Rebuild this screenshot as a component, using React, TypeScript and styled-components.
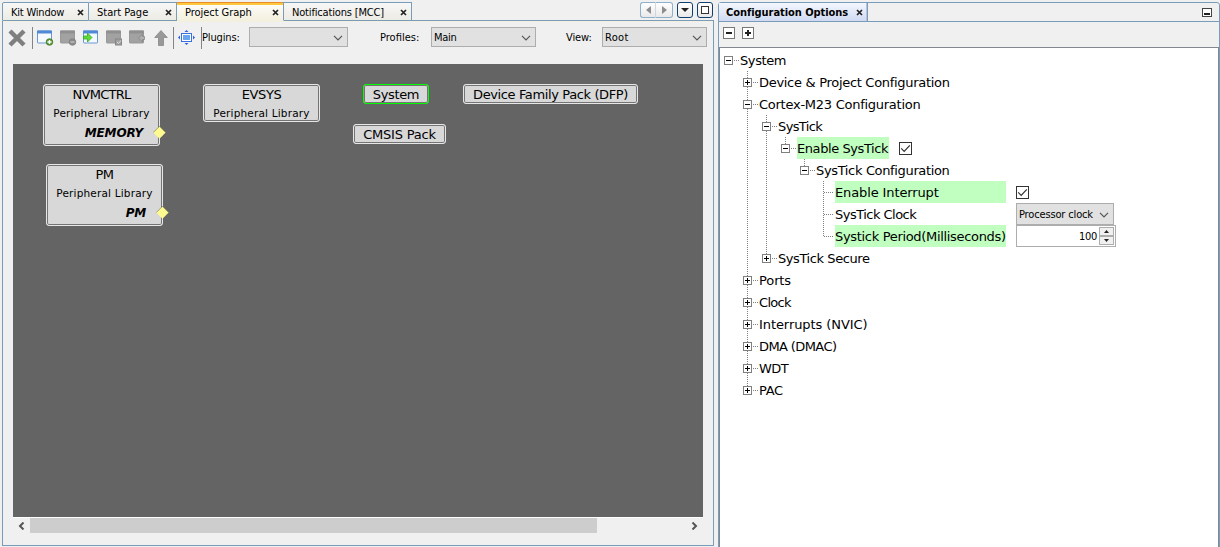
import React from 'react';
import styled, { createGlobalStyle, css } from 'styled-components';

const UI = `"DejaVu Sans Condensed", "DejaVu Sans", sans-serif`;
const WIDE = `"DejaVu Sans", sans-serif`;

const GlobalStyle = createGlobalStyle`
  * { box-sizing: border-box; }
  body { margin: 0; background: #f0f0f0; overflow: hidden; color: #000; font: 11px/14px ${UI}; }
`;

const Window = styled.div`
  display: flex;
  width: 1220px;
  height: 547px;
  padding: 2px 0 0 2px;
  overflow: hidden;
`;

const Text = styled.span<{ $ls?: number }>`
  white-space: pre;
  letter-spacing: ${(p) => p.$ls ?? 0}px;
`;

/* ---------- left window ---------- */
const GraphWindow = styled.section`
  width: 712px;
  height: 544px;
  display: flex;
  flex-direction: column;
`;

const TabStrip = styled.header`
  display: flex;
  height: 19px;
  flex: none;
`;

const Tab = styled.div<{ $w: number; $active?: boolean }>`
  width: ${(p) => p.$w}px;
  display: flex;
  align-items: center;
  justify-content: space-between;
  padding: 2px 4px 0 8px;
  border: 1px solid #7a9cbb;
  border-left-width: 0;
  background: linear-gradient(#f7f7f7, #ecebe4);
  &:first-child { border-left-width: 1px; border-top-left-radius: 2px; }
  ${(p) =>
    p.$active &&
    css`
      border-top: 0;
      padding-top: 3px;
      border-bottom-color: #f2efdf;
      background: linear-gradient(#e98b2c 0 1px, #ffc73c 1px 3px, #fdfcf7 3px, #f3f0df);
    `}
`;

const StripFill = styled.div`
  flex: 1;
  display: flex;
  justify-content: flex-end;
  padding-right: 1px;
  border-bottom: 1px solid #7a9cbb;
`;

const NavButton = styled.div<{ $soft?: boolean; $side?: 'l' | 'r' }>`
  width: ${(p) => (p.$side === 'r' ? 17 : 16)}px;
  height: 16px;
  display: flex;
  align-items: center;
  justify-content: center;
  border: 1px solid ${(p) => (p.$soft ? '#8fb0cb' : '#123f70')};
  border-radius: ${(p) => (p.$side === 'l' ? '3px 0 0 3px' : p.$side === 'r' ? '0 3px 3px 0' : '3px')};
  ${(p) => p.$side === 'r' && 'border-left: 0;'}
  ${(p) => p.$side === 'l' && 'border-right-color: #d0d8de;'}
  background: linear-gradient(#fff, #e9e9e9);
  margin-right: ${(p) => (p.$side === 'l' ? 0 : 4)}px;
  &:last-child { margin-right: 0; }
`;

const GraphBody = styled.div`
  flex: 1;
  border: 1px solid #7a9cbb;
  border-top: 0;
  display: flex;
  flex-direction: column;
  padding: 0 10px;
`;

const Toolbar = styled.div`
  height: 43px;
  margin: 0 -10px;
  padding: 6px 0 0 5px;
  display: flex;
  align-items: flex-start;
  flex: none;
  background: linear-gradient(#f3f0df 0 1px, #f0f0f0 1px);
`;

const Slot = styled.div<{ $w: number; $indent?: number }>`
  width: ${(p) => p.$w}px;
  padding-left: ${(p) => p.$indent ?? 0}px;
  height: 21px;
  display: flex;
  align-items: center;
  flex: none;
  svg { display: block; overflow: visible; }
`;

const Divider = styled.div`
  width: 1px;
  height: 22px;
  background: #848484;
  flex: none;
`;

const Select = styled.div<{ $w: number; $h?: number }>`
  width: ${(p) => p.$w}px;
  height: ${(p) => p.$h ?? 20}px;
  flex: none;
  display: flex;
  align-items: center;
  justify-content: space-between;
  padding: 2px 4px 0 2px;
  font: 11px/16px ${UI};
  background: #e1e1e1;
  border: 1px solid #adadad;
`;

const Canvas = styled.div`
  position: relative;
  height: 453px;
  flex: none;
  background: #646464;
`;

const Node = styled.div<{ $x: number; $y: number; $w: number; $h: number; $on?: boolean }>`
  position: absolute;
  left: ${(p) => p.$x}px;
  top: ${(p) => p.$y}px;
  width: ${(p) => p.$w}px;
  height: ${(p) => p.$h}px;
  border: 1px solid ${(p) => (p.$on ? '#00ff00' : '#e6e6e6')};
  border-radius: 3px;
  box-shadow: inset 0 0 0 1px #747474;
  background: #d8d8d8;
  display: flex;
  flex-direction: column;
  align-items: center;
  font-family: ${WIDE};
`;

const Title = styled.div`
  font-size: 13px;
  line-height: 20px;
  height: 19px;
`;

const Subtitle = styled.div`
  font-size: 10.5px;
  line-height: 19px;
  height: 19px;
  letter-spacing: 0.18px;
`;

const Port = styled.div`
  align-self: flex-end;
  padding-right: 16px;
  font: italic bold 12px/20px ${WIDE};
`;

const Pin = styled.svg`
  position: absolute;
  right: -7px;
  bottom: 6px;
`;

const ScrollBar = styled.div`
  display: flex;
  align-items: flex-start;
  height: 17px;
  border-top: 1px solid #fff;
`;

const ScrollArrow = styled.div`
  width: 17px;
  height: 15px;
  display: flex;
  align-items: center;
  justify-content: center;
`;

const ScrollTrack = styled.div`
  flex: 1;
  height: 15px;
`;

const ScrollThumb = styled.div`
  width: 567px;
  height: 15px;
  background: #cdcdcd;
`;

/* ---------- right window ---------- */
const OptionsWindow = styled.section`
  margin-left: 4px;
  width: 502px;
  height: 550px;
  border: 1px solid #7a9cbb;
  border-radius: 3px 3px 0 0;
  display: flex;
  flex-direction: column;
`;

const OptionsHeader = styled.header`
  height: 19px;
  flex: none;
  display: flex;
  justify-content: space-between;
  border-bottom: 1px solid #7a9cbb;
  padding-right: 7px;
  align-items: center;
`;

const OptionsTab = styled.div`
  width: 149px;
  height: 18px;
  display: flex;
  align-items: center;
  justify-content: space-between;
  padding: 1px 4px 0 7px;
  font-weight: bold;
  border-right: 1px solid #7a9cbb;
  box-shadow: inset -1px 0 #b4c3e0;
  background: linear-gradient(#f4f7fd, #cfdaf2);
`;

const OptionsTools = styled.div`
  height: 25px;
  flex: none;
  display: flex;
  gap: 7px;
  padding: 5px 0 0 4px;
`;

const TreePane = styled.div`
  flex: 1;
  background: #fff;
  border: 1px solid #828790;
  padding: 1px 0 0 4px;
  font: 13px/22px ${WIDE};
`;

const Row = styled.div`
  display: flex;
  height: 22px;
  align-items: center;
`;

const vdots = 'repeating-linear-gradient(#808080 0 1px, transparent 1px 2px)';
const hdots = 'repeating-linear-gradient(90deg, #808080 0 1px, transparent 1px 2px)';

const Guide = styled.div<{ $line: boolean }>`
  width: 19px;
  height: 22px;
  flex: none;
  background: ${(p) => (p.$line ? `${vdots} 4px 0 / 1px 22px no-repeat` : 'none')};
`;

const Branch = styled.div<{ $root: boolean; $next: boolean; $leaf: boolean }>`
  width: 16px;
  height: 22px;
  flex: none;
  display: flex;
  align-items: center;
  background:
    ${(p) => (p.$root ? '' : `${vdots} 4px 0 / 1px ${p.$next ? 22 : 12}px no-repeat,`)}
    ${hdots} ${(p) => (p.$leaf ? 5 : 10)}px 11px / ${(p) => (p.$leaf ? 9 : 5)}px 1px no-repeat;
  svg { display: block; }
`;

const Label = styled.div<{ $mark?: boolean; $w?: number }>`
  height: 22px;
  line-height: 24px;
  width: ${(p) => (p.$w ? `${p.$w}px` : 'auto')};
  background: ${(p) => (p.$mark ? '#c0ffc0' : 'transparent')};
  margin-right: 10px;
`;

const Spinner = styled.div`
  width: 100px;
  height: 22px;
  border: 1px solid #adadad;
  background: #fff;
  display: flex;
  justify-content: flex-end;
  align-items: center;
  gap: 2px;
  padding-right: 1px;
  font: 11px/20px ${UI};
`;

const SpinValue = styled(Text)`
  padding-top: 2px;
`;

const SpinButtons = styled.div`
  width: 15px;
  height: 18px;
  display: flex;
  flex-direction: column;
`;

const SpinButton = styled.div`
  flex: 1;
  border: 1px solid #adadad;
  background: #f0f0f0;
  display: flex;
  align-items: center;
  justify-content: center;
`;

const Close = () => (
  <svg width="7" height="7" viewBox="0 0 7 7">
    <path d="M1 1l5 5M6 1L1 6" stroke="#222" strokeWidth="1.7" />
  </svg>
);

const Chevron = () => (
  <svg width="10" height="6" viewBox="0 0 10 6">
    <path d="M1 .8l4 4 4-4" fill="none" stroke="#555" strokeWidth="1.2" />
  </svg>
);

const Expander = ({ open }: { open: boolean }) => (
  <svg width="9" height="9" shapeRendering="crispEdges">
    <rect x=".5" y=".5" width="8" height="8" fill="#fff" stroke="#808080" />
    <path d={open ? 'M2 4.5h5' : 'M2 4.5h5M4.5 2v5'} stroke="#000" />
  </svg>
);

const ToolBox = ({ plus }: { plus?: boolean }) => (
  <svg width="12" height="12" shapeRendering="crispEdges">
    <rect x=".5" y=".5" width="11" height="11" fill="#fff" stroke="#777" />
    <path d={plus ? 'M3 6h6M6 3v6' : 'M3 6h6'} stroke="#222" strokeWidth="2" />
  </svg>
);

const Check = () => (
  <svg width="13" height="13">
    <rect x=".5" y=".5" width="12" height="12" fill="#fff" stroke="#333" />
    <path d="M2.2 6.3l3 3 5.6-6" fill="none" stroke="#333" strokeWidth="1.2" />
  </svg>
);

const Diamond = () => (
  <Pin width="13" height="13" viewBox="0 0 13 13">
    <path d="M6.500 .3l6.200 6.200-6.200 6.200-6.200-6.200z" fill="#fffa90" />
    <path d="M.3 6.500L6.500 .3l6.200 6.200" fill="none" stroke="#6b6b50" strokeWidth=".6" />
  </Pin>
);

type PanelKind = 'add' | 'remove' | 'import' | 'check' | 'back';

const PanelIcon = ({ kind }: { kind: PanelKind }) => {
  const live = kind === 'add' || kind === 'import';
  return (
    <svg width="17" height="16" viewBox="0 0 17 16">
      <rect x=".5" y="1" width="14" height="12" rx=".5" fill={live ? '#f4f9ff' : '#a2a2a2'} stroke={live ? '#6c97cf' : '#999'} />
      <rect x="0" y=".5" width="15" height="3" rx=".5" fill={live ? '#4f88d6' : '#909090'} />
      {kind === 'add' && (
        <>
          <circle cx="12.500" cy="12" r="3.300" fill="#5c9c38" stroke="#3e7a22" strokeWidth=".8" />
          <path d="M10.500 12h4M12.500 10v4" stroke="#fff" strokeWidth="1.300" />
        </>
      )}
      {kind === 'remove' && (
        <>
          <circle cx="12.500" cy="12" r="3.300" fill="#8c8c8c" stroke="#7f7f7f" strokeWidth=".8" />
          <path d="M10.500 12h4" stroke="#c4c4c4" strokeWidth="1.300" />
        </>
      )}
      {kind === 'import' && <path d="M.5 6h4V3L9 7.500 4.500 12V9h-4z" fill="#5edb3a" stroke="#36a825" strokeWidth=".8" />}
      {kind === 'check' && (
        <>
          <rect x="9.500" y="9" width="6" height="6" fill="#a0a0a0" stroke="#868686" />
          <path d="M11 12l1.500 1.500L15 10.500" fill="none" stroke="#ddd" />
        </>
      )}
      {kind === 'back' && (
        <path d="M9.500 8L13.500 4.200v2.300h2v3h-2v2.300z" fill="#b0b0b0" stroke="#858585" strokeWidth=".8" />
      )}
    </svg>
  );
};

const CrossIcon = () => (
  <svg width="18" height="18" viewBox="0 0 18 18">
    <path d="M2 2l14 14M16 2L2 16" stroke="#7f7f7f" strokeWidth="4.400" />
  </svg>
);

const UpIcon = () => (
  <svg width="14" height="16" viewBox="0 0 14 16">
    <path d="M7 .5l6.300 7H9.500v8h-5v-8H.7z" fill="#999" stroke="#888" strokeWidth=".8" />
  </svg>
);

const FitIcon = () => (
  <svg width="17" height="16" viewBox="0 0 17 16">
    <rect x="3.500" y="3.500" width="10" height="8" fill="#fff" stroke="#3a6fe0" />
    <rect x="5" y="5" width="7" height="5" fill="#6aa6ee" />
    <path d="M8.500 0l2 2h-4zM8.500 15l2-2h-4zM0 7.500l2-2v4zM17 7.500l-2-2v4z" fill="#2d5fe0" />
  </svg>
);

const Triangle = ({ d, c = '#222', w, h }: { d: string; c?: string; w: number; h: number }) => (
  <svg width={w} height={h}>
    <path d={d} fill={c} />
  </svg>
);

type Item = {
  text: string;
  level: number;
  ls?: number;
  guides?: boolean[];
  next?: boolean;
  kind: 'open' | 'closed' | 'leaf';
  mark?: boolean;
  width?: number;
  editor?: 'check' | 'select' | 'spin';
};

const items: Item[] = [
  { text: 'System', ls: -0.4, level: 0, kind: 'open' },
  { text: 'Device & Project Configuration', ls: -0.3, level: 1, kind: 'closed', next: true },
  { text: 'Cortex-M23 Configuration', ls: -0.26, level: 1, kind: 'open', next: true },
  { text: 'SysTick', ls: -0.62, level: 2, kind: 'open', guides: [], next: true },
  { text: 'Enable SysTick', ls: -0.42, level: 3, kind: 'open', guides: [true], mark: true, width: 92, editor: 'check' },
  { text: 'SysTick Configuration', ls: -0.35, level: 4, kind: 'open', guides: [true, false] },
  { text: 'Enable Interrupt', ls: -0.12, level: 5, kind: 'leaf', guides: [true, false, false], next: true, mark: true, width: 171, editor: 'check' },
  { text: 'SysTick Clock', ls: -0.52, level: 5, kind: 'leaf', guides: [true, false, false], next: true, width: 171, editor: 'select' },
  { text: 'Systick Period(Milliseconds)', ls: -0.32, level: 5, kind: 'leaf', guides: [true, false, false], mark: true, width: 171, editor: 'spin' },
  { text: 'SysTick Secure', ls: -0.42, level: 2, kind: 'closed', guides: [] },
  { text: 'Ports', ls: -0.1, level: 1, kind: 'closed', next: true },
  { text: 'Clock', ls: -0.7, level: 1, kind: 'closed', next: true },
  { text: 'Interrupts (NVIC)', ls: -0.08, level: 1, kind: 'closed', next: true },
  { text: 'DMA (DMAC)', ls: -0.6, level: 1, kind: 'closed', next: true },
  { text: 'WDT', ls: -0.6, level: 1, kind: 'closed', next: true },
  { text: 'PAC', ls: -0.3, level: 1, kind: 'closed' },
];

const Editor = ({ kind }: { kind: Item['editor'] }) => {
  if (kind === 'check') return <Check />;
  if (kind === 'select')
    return (
      <Select $w={98} $h={22}>
        <Text $ls={-0.15}>Processor clock</Text>
        <Chevron />
      </Select>
    );
  if (kind === 'spin')
    return (
      <Spinner>
        <SpinValue $ls={-0.3}>100</SpinValue>
        <SpinButtons>
          <SpinButton><Triangle w={5} h={3} d="M2.500 0L5 3H0z" /></SpinButton>
          <SpinButton><Triangle w={5} h={3} d="M0 0h5L2.500 3z" /></SpinButton>
        </SpinButtons>
      </Spinner>
    );
  return null;
};

export default function App() {
  return (
    <>
      <GlobalStyle />
      <Window>
        <GraphWindow>
          <TabStrip>
            <Tab $w={87}><Text $ls={-0.2}>Kit Window</Text><Close /></Tab>
            <Tab $w={88}><Text>Start Page</Text><Close /></Tab>
            <Tab $w={107} $active><Text $ls={-0.05}>Project Graph</Text><Close /></Tab>
            <Tab $w={128}><Text $ls={-0.17}>Notifications [MCC]</Text><Close /></Tab>
            <StripFill>
              <NavButton $soft $side="l"><Triangle w={5} h={8} d="M5 0v8L0 4z" c="#8d8d8d" /></NavButton>
              <NavButton $soft $side="r"><Triangle w={5} h={8} d="M0 0v8l5-4z" c="#8d8d8d" /></NavButton>
              <NavButton><Triangle w={8} h={4} d="M0 0h8L4 4z" /></NavButton>
              <NavButton>
                <svg width="8" height="8"><rect x=".5" y=".5" width="7" height="7" fill="#fff" stroke="#333" /></svg>
              </NavButton>
            </StripFill>
          </TabStrip>
          <GraphBody>
            <Toolbar>
              <Slot $w={24}><CrossIcon /></Slot>
              <Divider />
              <Slot $w={27} $indent={4}><PanelIcon kind="add" /></Slot>
              <Slot $w={23}><PanelIcon kind="remove" /></Slot>
              <Slot $w={23}><PanelIcon kind="import" /></Slot>
              <Slot $w={23}><PanelIcon kind="check" /></Slot>
              <Slot $w={25}><PanelIcon kind="back" /></Slot>
              <Slot $w={19}><UpIcon /></Slot>
              <Divider />
              <Slot $w={27} $indent={4}><FitIcon /></Slot>
              <Divider />
              <Slot $w={47}><Text $ls={-0.15}>Plugins:</Text></Slot>
              <Select $w={99}><span /><Chevron /></Select>
              <Slot $w={83} $indent={32}><Text>Profiles:</Text></Slot>
              <Select $w={105}><Text $ls={-0.3}>Main</Text><Chevron /></Select>
              <Slot $w={66} $indent={30}><Text $ls={-0.1}>View:</Text></Slot>
              <Select $w={105}><Text $ls={0.3}>Root</Text><Chevron /></Select>
            </Toolbar>
            <Canvas>
              <Node $x={30} $y={20} $w={117} $h={62}>
                <Title><Text $ls={-0.75}>NVMCTRL</Text></Title>
                <Subtitle>Peripheral Library</Subtitle>
                <Port><Text $ls={-0.15}>MEMORY</Text></Port>
                <Diamond />
              </Node>
              <Node $x={190} $y={20} $w={117} $h={38}>
                <Title><Text $ls={-0.4}>EVSYS</Text></Title>
                <Subtitle>Peripheral Library</Subtitle>
              </Node>
              <Node $x={33} $y={100} $w={117} $h={62}>
                <Title><Text $ls={-0.6}>PM</Text></Title>
                <Subtitle>Peripheral Library</Subtitle>
                <Port><Text $ls={-0.3}>PM</Text></Port>
                <Diamond />
              </Node>
              <Node $x={350} $y={20} $w={66} $h={20} $on><Title><Text $ls={-0.35}>System</Text></Title></Node>
              <Node $x={450} $y={20} $w={175} $h={20}><Title><Text $ls={-0.38}>Device Family Pack (DFP)</Text></Title></Node>
              <Node $x={340} $y={60} $w={93} $h={20}><Title><Text $ls={-0.2}>CMSIS Pack</Text></Title></Node>
            </Canvas>
            <ScrollBar>
              <ScrollArrow>
                <svg width="7" height="8"><path d="M5.500 .5L2 4l3.500 3.500" fill="none" stroke="#555" strokeWidth="2" /></svg>
              </ScrollArrow>
              <ScrollTrack><ScrollThumb /></ScrollTrack>
              <ScrollArrow>
                <svg width="7" height="8"><path d="M1.500 .5L5 4 1.500 7.500" fill="none" stroke="#555" strokeWidth="2" /></svg>
              </ScrollArrow>
            </ScrollBar>
          </GraphBody>
        </GraphWindow>
        <OptionsWindow>
          <OptionsHeader>
            <OptionsTab><Text $ls={-0.05}>Configuration Options</Text><Close /></OptionsTab>
            <svg width="10" height="9" shapeRendering="crispEdges">
              <rect x=".5" y=".5" width="9" height="8" fill="#fff" stroke="#444" />
              <path d="M2 6h6" stroke="#222" strokeWidth="2" />
            </svg>
          </OptionsHeader>
          <OptionsTools><ToolBox /><ToolBox plus /></OptionsTools>
          <TreePane>
            {items.map((it) => (
              <Row key={it.text}>
                {it.level > 0 && <Guide $line={false} />}
                {it.level > 1 && <Guide $line />}
                {(it.guides ?? []).map((g, i) => <Guide key={i} $line={g} />)}
                <Branch $root={it.level === 0} $next={!!it.next} $leaf={it.kind === 'leaf'}>
                  {it.kind !== 'leaf' && <Expander open={it.kind === 'open'} />}
                </Branch>
                <Label $mark={it.mark} $w={it.width}><Text $ls={it.ls}>{it.text}</Text></Label>
                <Editor kind={it.editor} />
              </Row>
            ))}
          </TreePane>
        </OptionsWindow>
      </Window>
    </>
  );
}
